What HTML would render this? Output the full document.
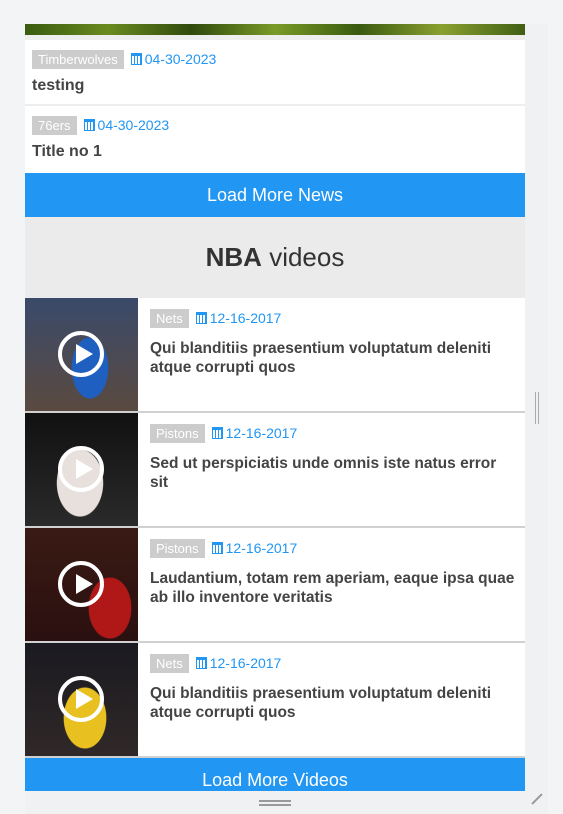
<!DOCTYPE html>
<html><head><style>
*{box-sizing:border-box;margin:0;padding:0}
body{width:563px;height:814px;background:#f3f4f5;font-family:"Liberation Sans",sans-serif;position:relative;overflow:hidden}
.c{position:absolute;left:25px;width:500px;top:24px;background:#fff}
.strip{position:absolute;left:525px;top:24px;width:23px;height:766px;background:#f0f1f3}
.bot{position:absolute;left:25px;top:790px;width:523px;height:24px;background:#f0f1f3}
.tag{display:inline-block;background:#ccc;color:#fff;font-size:13px;padding:2px 6px;margin-right:7px}
.date{color:#2196f3;font-size:14px}
.cal{display:inline-block;width:11px;height:12px;border:1.5px solid #2196f3;border-top-width:3px;vertical-align:-1px;margin-right:3px;background:repeating-linear-gradient(90deg,#fff 0 2px,#2196f3 2px 3px)}
.news{height:66px;padding:10px 7px;border-bottom:2px solid #eee}
.news h3{font-size:16px;color:#444;margin-top:8px}
.btn{background:#2196f3;color:#fff;text-align:center;font-size:18px}
.vh{height:81px;background:#ebebeb;text-align:center;font-size:26px;line-height:81px;color:#333}
.v{height:115px;border-bottom:2px solid #d0d0d0;position:relative}
.th{position:absolute;left:0;top:0;width:113px;height:113px}
.play{position:absolute;left:33px;top:33px;width:46px;height:46px;border:4px solid #fff;border-radius:50%}
.play:after{content:"";position:absolute;left:14px;top:9px;border-left:17px solid #fff;border-top:10px solid transparent;border-bottom:10px solid transparent}
.vt{position:absolute;left:125px;top:11px;right:8px}
.vt h3{font-size:15.5px;color:#444;line-height:19px;margin-top:11px;white-space:nowrap}
</style></head><body>
<div class="strip"></div>
<div style="position:absolute;left:535px;top:392px;width:4px;height:32px;border-left:1.5px solid #aaa;border-right:1.5px solid #aaa"></div>
<div class="bot"><div style="position:absolute;left:234px;top:10px;width:32px;height:6px;border-top:2px solid #999;border-bottom:2px solid #999"></div>
<div style="position:absolute;left:505px;top:8px;width:14px;height:2px;background:#999;transform:rotate(-45deg)"></div></div>
<div class="c">
<div style="height:11px;background:linear-gradient(90deg,#3a5a10,#6a8a20,#2f4a0c,#7a9a28,#3a5a10,#8aa030,#405f14)"></div>
<div style="height:5px;background:#eee"></div>
<div class="news"><span class="tag">Timberwolves</span><span class="date"><i class="cal"></i>04-30-2023</span><h3>testing</h3></div>
<div class="news" style="height:67px;border:0"><span class="tag">76ers</span><span class="date"><i class="cal"></i>04-30-2023</span><h3>Title no 1</h3></div>
<div class="btn" style="height:44px;line-height:44px">Load More News</div>
<div class="vh"><b>NBA</b> videos</div>
<div class="v"><div class="th" style="background:radial-gradient(ellipse 30px 50px at 65px 70px,#1f5fc0 60%,transparent 62%),linear-gradient(#3a4a6a,#5a4a40)"><div class="play"></div></div><div class="vt"><span class="tag">Nets</span><span class="date"><i class="cal"></i>12-16-2017</span><h3>Qui blanditiis praesentium voluptatum deleniti<br>atque corrupti quos</h3></div></div>
<div class="v"><div class="th" style="background:radial-gradient(ellipse 38px 55px at 55px 70px,#e8e0dc 60%,transparent 62%),linear-gradient(#111,#2a2a2a)"><div class="play"></div></div><div class="vt"><span class="tag">Pistons</span><span class="date"><i class="cal"></i>12-16-2017</span><h3>Sed ut perspiciatis unde omnis iste natus error<br>sit</h3></div></div>
<div class="v"><div class="th" style="background:radial-gradient(ellipse 35px 50px at 85px 80px,#b01818 60%,transparent 62%),linear-gradient(#3a1a14,#2a1010)"><div class="play"></div></div><div class="vt"><span class="tag">Pistons</span><span class="date"><i class="cal"></i>12-16-2017</span><h3>Laudantium, totam rem aperiam, eaque ipsa quae<br>ab illo inventore veritatis</h3></div></div>
<div class="v"><div class="th" style="background:radial-gradient(ellipse 35px 50px at 60px 75px,#e8c020 60%,transparent 62%),linear-gradient(#1a1a20,#302828)"><div class="play"></div></div><div class="vt"><span class="tag">Nets</span><span class="date"><i class="cal"></i>12-16-2017</span><h3>Qui blanditiis praesentium voluptatum deleniti<br>atque corrupti quos</h3></div></div>
<div class="btn" style="height:33px;line-height:44px;overflow:hidden">Load More Videos</div>
</div>
</body></html>
